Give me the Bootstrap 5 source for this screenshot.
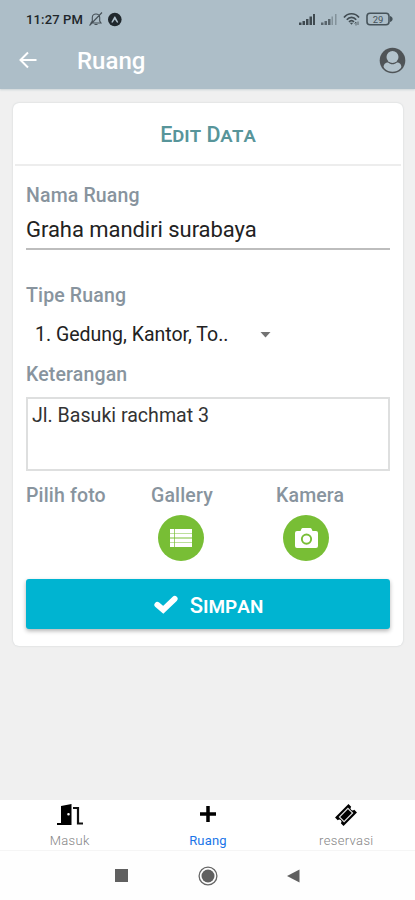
<!DOCTYPE html>
<html lang="id">
<head>
<meta charset="utf-8">
<meta name="viewport" content="width=device-width, initial-scale=1">
<title>Ruang</title>
<link href="https://cdn.jsdelivr.net/npm/bootstrap@5.3.0/dist/css/bootstrap.min.css" rel="stylesheet">
<style>
  body { font-family: Roboto, "Noto Sans", sans-serif; background: #f0f0f0; height: 900px; overflow: hidden; line-height: 1; }
  svg { display: block; flex: none; }
  .app-header { background: #adbec8; height: 89px; box-shadow: 0 1px 2px rgba(120,145,155,.3); }
  .status-bar { height: 38px; padding: 0 22px 0 26px; }
  .clock { font-size: 13px; font-weight: 500; color: #20262a; letter-spacing: .15px; width: 58px; white-space: nowrap; }
  .status-gap { margin-left: 6px; }
  .title-bar { height: 51px; padding: 0 9px 7px 19px; }
  .page-title { font-size: 24px; font-weight: 500; color: #fff; margin-left: 40px; padding-top: 2px; }
  .form-panel { margin: 14px 12px 0 13px; height: 543px; border: 0; border-radius: 6px; box-shadow: 0 0 2px rgba(80,100,110,.24); }
  .panel-title { height: 63px; margin: 0 2px; border-bottom: 2px solid #ededed; color: #58959a; font-size: 21.5px; font-weight: 500; font-variant: small-caps; padding-top: 3px; }
  .panel-body { padding: 16px 13px 0; }
  .field-label { height: 28px; line-height: 28px; font-size: 19.5px; font-weight: 500; color: #88949e; letter-spacing: .15px; margin: 0; display: block; }
  .field-gap { margin-top: 32px; }
  .line-input { height: 40px; border: 0; border-bottom: 2px solid #bdbdbd; border-radius: 0; padding: 0; font-size: 22px; color: #222; letter-spacing: -.05px; background: none; }
  .type-picker { height: 38px; width: 246px; margin: 6px 0 7px; padding: 0 1px 0 9px; font-size: 19.5px; color: #222; }
  .note-input { height: 74px; border: 2px solid #dedfdf; border-radius: 0; padding: 4px 4px; font-size: 19.6px; line-height: 26px; resize: none; color: #333; background: none; }
  .photo-row { margin-top: 11px; }
  .photo-col { width: 125px; }
  .round-btn { width: 46px; height: 46px; background: #78be35; margin: 5px 0 0 7px; }
  .save-btn { margin-top: 18px; height: 50px; border: 0; border-radius: 3px; background: #00b4d1; color: #fff; font-size: 22px; font-weight: 500; font-variant: small-caps; box-shadow: 0 2px 4px rgba(0,0,0,.3); line-height: 1; gap: 12px; padding: 4px 0 0 1px; }
  .save-btn svg { margin-top: -3px; }
  .tab-strip { height: 51px; background: #fff; border-bottom: 1px solid #f5f5f5; }
  .tab-link { color: #858585; font-size: 13px; font-weight: 300; letter-spacing: .35px; text-decoration: none; padding: 3px 0 0 1px; }
  .tab-link.active { color: #1a75e8; font-weight: 400; letter-spacing: .2px; }
  .tab-link svg { margin-bottom: 7px; }
  .system-nav { height: 49px; background: #fefefe; padding: 0 115px; }
</style>
</head>
<body class="d-flex flex-column">
<header class="app-header flex-shrink-0">
  <div class="status-bar d-flex align-items-center justify-content-between">
    <div class="d-flex align-items-center">
      <span class="clock">11:27 PM</span>
      <svg class="ms-1" width="16" height="16" viewBox="0 0 16 16" fill="none" stroke="#465057" stroke-width="1.1"><path d="M3 12h10l-1.300-2V6.500C11.700 4.300 10 3 8 3S4.300 4.300 4.300 6.500V10zM6.500 13.500h3M14 1.500 1.500 14.500"/></svg>
      <svg width="15" height="15" class="ms-1" viewBox="0 0 15 15"><circle cx="6.800" cy="7.500" r="6.800" fill="#20282d"/><path d="M3.300 10.300 6.400 4.500h.8l3.100 5.800-1.200.5-2.300-3.300-2.300 3.300z" fill="#adbec8"/></svg>
    </div>
    <div class="d-flex align-items-center">
      <svg width="16" height="13" viewBox="0 0 16 13" fill="#3f4a50"><path d="M0 9.500h2.500V12H0zM3.500 8H6v4H3.500zM7 6h2.500v6H7zM10.500 3.500H13V12h-2.500zM14 1h2v11h-2z"/></svg>
      <svg class="status-gap" width="16" height="13" viewBox="0 0 16 13" fill="#59656c"><path d="M0 9.500h2.500V12H0zM3.500 8H6v4H3.500zM7 6h2.500v6H7z"/><path opacity=".5" d="M10.500 3.500h1.500V12h-1.500zM14 1h1.500v11H14z"/></svg>
      <svg class="status-gap" width="17" height="14" viewBox="0 0 17 14" fill="none" stroke="#414c52" stroke-width="1.700"><path d="M1 5.500C5 .5 12 .5 16 5.500M3.800 7.800C6.400 4.600 10.600 4.600 13.200 7.800M6 9.800c1.500-1.500 3.500-1.500 5 0"/><path d="m6.800 10.800 1.700 2 1.700-2z" fill="#414c52" stroke="none"/><path d="M13 13.500V10m-1.500 1.500L13 10M15 9.500V13" stroke-width=".8"/></svg>
      <svg class="status-gap" width="27" height="14" viewBox="0 0 27 14"><rect x="1" y="1.200" width="22" height="11.500" rx="3" fill="none" stroke="#46535a" stroke-width="1.600"/><path d="M24 4c3.500 1 3.500 5 0 6z" fill="#46535a"/><text x="12" y="10.500" font-size="9.500" text-anchor="middle" fill="#46535a">29</text></svg>
    </div>
  </div>
  <div class="title-bar d-flex align-items-center">
    <svg width="18" height="18" viewBox="0 0 18 18" fill="none" stroke="#fff" stroke-width="2"><path d="M17.500 9H2M9 1.500 1.500 9 9 16.500"/></svg>
    <h1 class="page-title mb-0">Ruang</h1>
    <svg class="ms-auto" width="27" height="27" viewBox="0 0 27 27"><defs><clipPath id="ring"><circle cx="13.500" cy="13.500" r="11.200"/></clipPath></defs><circle cx="13.500" cy="13.500" r="12.800" fill="#4f5457"/><g clip-path="url(#ring)" fill="#b3c3cc"><circle cx="13.500" cy="10" r="6"/><path d="M4.500 21c0-4 2-5.500 4.600-5.500 2.400 2.400 6.400 2.400 8.800 0 2.600 0 4.600 1.500 4.600 5.500v6h-18z"/></g></svg>
  </div>
</header>

<main class="flex-grow-1">
  <form class="card form-panel">
    <div class="panel-title d-flex align-items-center justify-content-center">Edit Data</div>
    <div class="panel-body">
      <label class="field-label" for="nama">Nama Ruang</label>
      <input id="nama" class="form-control line-input" value="Graha mandiri surabaya">
      <label class="field-label field-gap" for="tipe">Tipe Ruang</label>
      <div id="tipe" class="type-picker d-flex align-items-center justify-content-between" role="button">
        <span>1. Gedung, Kantor, To..</span>
        <svg width="11" height="6" viewBox="0 0 11 6"><path d="M.5 0h10l-5 5.500z" fill="#737373"/></svg>
      </div>
      <label class="field-label" for="ket">Keterangan</label>
      <textarea id="ket" class="form-control note-input mt-2">Jl. Basuki rachmat 3</textarea>
      <div class="photo-row d-flex">
        <div class="photo-col"><span class="field-label">Pilih foto</span></div>
        <div class="photo-col">
          <span class="field-label">Gallery</span>
          <div class="round-btn rounded-circle d-flex align-items-center justify-content-center">
            <svg width="22" height="18" viewBox="0 0 22 18" fill="#fff"><path d="M0 0h4v4H0zM4.700 0H22v4H4.700zM0 4.600h4v4H0zM4.700 4.600H22v4H4.700zM0 9.400h4v4H0zM4.700 9.400H22v4H4.700zM0 14h4v4H0zM4.700 14H22v4H4.700z"/></svg>
          </div>
        </div>
        <div>
          <span class="field-label">Kamera</span>
          <div class="round-btn rounded-circle d-flex align-items-center justify-content-center">
            <svg width="23" height="20" viewBox="0 0 23 20"><path fill="#fff" fill-rule="evenodd" d="M2 3h3.500l1-2.200Q6.900 0 7.700 0h7.600q.8 0 1.200.8l1 2.200H21q2 0 2 2v13q0 2-2 2H2q-2 0-2-2V5q0-2 2-2zM11.500 5.500a5.600 5.600 0 1 0 0 11.200 5.600 5.600 0 0 0 0-11.200zm0 1.900a3.700 3.700 0 1 1 0 7.400 3.700 3.700 0 0 1 0-7.400z"/></svg>
          </div>
        </div>
      </div>
      <button type="button" class="btn save-btn w-100 d-flex align-items-center justify-content-center">
        <svg width="24" height="19" viewBox="0 0 24 19"><path d="M3.300 9.800 9.200 14.800 20.700 3.800" fill="none" stroke="#fff" stroke-width="5.800" stroke-linecap="round"/></svg>
        <span>Simpan</span>
      </button>
    </div>
  </form>
</main>

<nav class="tab-strip d-flex flex-shrink-0">
  <a class="tab-link d-flex flex-column align-items-center w-100" href="#">
    <svg width="26" height="24" viewBox="0 0 26 24"><path fill-rule="evenodd" d="M4 3 14.500 1v21H0v-2h4zM11.500 10a1.300 1.300 0 1 0 0 2.600 1.300 1.300 0 0 0 0-2.600z"/><path d="M16 5h5v15.500h5" fill="none" stroke="#111" stroke-width="2.200"/></svg>Masuk</a>
  <a class="tab-link active d-flex flex-column align-items-center w-100" href="#">
    <svg width="18" height="24" viewBox="0 0 18 24"><path d="M9 3v16M1 11h16" stroke="#000" stroke-width="3.500"/></svg>Ruang</a>
  <a class="tab-link d-flex flex-column align-items-center w-100" href="#">
    <svg width="22" height="24" viewBox="0 0 22 24"><g transform="rotate(-45 11 12)"><path d="M1.500 6h19v3.800a2.200 2.200 0 0 0 0 4.400V18h-19v-3.800a2.200 2.200 0 0 0 0-4.400z"/><rect x="5" y="8.700" width="12" height="6.600" fill="none" stroke="#ddd" stroke-width="1.200"/></g></svg>reservasi</a>
</nav>
<div class="system-nav d-flex align-items-center justify-content-between flex-shrink-0">
  <svg width="13" height="13" viewBox="0 0 13 13"><path d="M0 0h13v13H0z" fill="#606060"/></svg>
  <svg width="20" height="20" viewBox="0 0 20 20"><circle cx="10" cy="10" r="8.900" fill="none" stroke="#666" stroke-width="1.300"/><circle cx="10" cy="10" r="6.500" fill="#606060"/></svg>
  <svg width="13" height="14" viewBox="0 0 13 14"><path d="M0 7 12.500.5v13z" fill="#606060"/></svg>
</div>
<script src="https://cdn.jsdelivr.net/npm/bootstrap@5.3.0/dist/js/bootstrap.bundle.min.js"></script>
</body>
</html>
